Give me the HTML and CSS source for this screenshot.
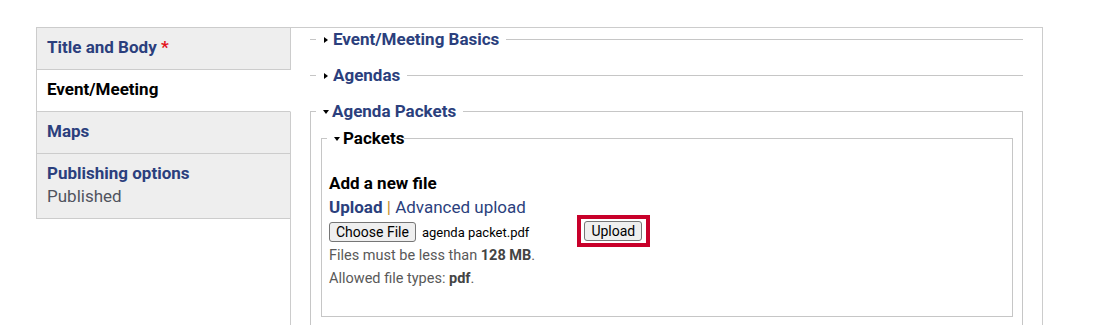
FILE: index.html
```html
<!DOCTYPE html>
<html>

<head>
  <title>Edit Meeting</title>
  <link rel="stylesheet" href="styles.css">
</head>

<body>
  <div class="page">
    <div class="vertical-tabs">
      <ul class="tabs-menu">
        <li class="tab-item">
          <span class="tab-title">Title and Body <span class="required">*</span></span>
        </li>
        <li class="tab-item active">
          <span class="tab-title">Event/Meeting</span>
        </li>
        <li class="tab-item">
          <span class="tab-title">Maps</span>
        </li>
        <li class="tab-item">
          <span class="tab-title">Publishing options</span>
          <span class="tab-summary">Published</span>
        </li>
      </ul>

      <div class="tabs-pane">
        <fieldset class="group collapsed">
          <legend><span class="arrow right"></span>Event/Meeting Basics</legend>
        </fieldset>

        <fieldset class="group collapsed">
          <legend><span class="arrow right"></span>Agendas</legend>
        </fieldset>

        <fieldset class="group open">
          <legend><span class="arrow down"></span>Agenda Packets</legend>
          <div class="group-wrapper">
            <fieldset class="group open inner">
              <legend><span class="arrow down"></span>Packets</legend>
              <div class="inner-wrapper">
                <div class="field-label">Add a new file</div>
                <div class="upload-links">
                  <a class="current">Upload</a> <span class="sep">|</span> <a>Advanced upload</a>
                </div>
                <div class="file-row">
                  <button class="btn">Choose File</button>
                  <span class="file-name">agenda packet.pdf</span>
                  <span class="highlight">
                    <button class="btn">Upload</button>
                  </span>
                </div>
                <div class="description">Files must be less than <strong>128 MB</strong>.</div>
                <div class="description second">Allowed file types: <strong>pdf</strong>.</div>
              </div>
            </fieldset>
          </div>
        </fieldset>
      </div>
    </div>
  </div>
</body>

</html>
```

FILE: styles.css
```css
body {
  margin: 0;
  font-family: Roboto, "Liberation Sans", sans-serif;
  background-color: #fff;
  color: #000;
  overflow: hidden;
}

.page {
  padding: 27px 0 0 36px;
}

.vertical-tabs {
  display: flex;
  align-items: flex-start;
  width: 1007px;
}

/* left tab list */
.tabs-menu {
  list-style: none;
  margin: 0;
  padding: 0;
  width: 255px;
  flex-shrink: 0;
  border-top: 1px solid #ccc;
  box-sizing: border-box;
}

.tab-item {
  padding: 9px 10px 12px;
  background-color: #eee;
  border: 1px solid #ccc;
  border-top: none;
  line-height: 20px;
}

.tab-item.active {
  background-color: #fff;
  border-right-color: #fff;
  position: relative;
  z-index: 1;
}

.tab-title {
  display: block;
  font-size: 17px;
  font-weight: bold;
  color: #2b3f7d;
}

.active .tab-title {
  color: #000;
}

.required {
  color: #e4121b;
}

.tab-summary {
  display: block;
  margin-top: 3px;
  font-size: 17px;
  color: #50535e;
}

/* right pane */
.tabs-pane {
  flex: 1;
  margin-left: -1px;
  min-height: 320px;
  border: 1px solid #ccc;
  border-bottom: none;
  padding: 1px 19px 0 19px;
}

.group {
  margin: 0 0 16px;
  padding: 0;
  min-width: 0;
  border: 1px solid #c6c6c6;
  border-bottom: none;
}

.group.collapsed {
  border-width: 1px 0 0 0;
}

.group legend {
  margin-left: 5px;
  padding: 0 7px;
  font-size: 17px;
  font-weight: bold;
  line-height: 20px;
  color: #2b3f7d;
}

.group.collapsed legend {
  margin-left: 6px;
  padding-left: 8px;
}

.arrow {
  display: inline-block;
  width: 0;
  height: 0;
  vertical-align: middle;
  position: relative;
  top: -1px;
}

.arrow.right {
  border-left: 4px solid #000;
  border-top: 3px solid transparent;
  border-bottom: 3px solid transparent;
  margin-right: 5px;
}

.arrow.down {
  border-top: 4px solid #000;
  border-left: 3.5px solid transparent;
  border-right: 3.5px solid transparent;
  margin-right: 3px;
}

.group-wrapper {
  padding: 7px 9px 20px 10px;
}

.group.inner {
  border-bottom: 1px solid #c6c6c6;
  margin: 0;
}

.group.inner legend {
  color: #000;
  padding-right: 0;
}

.inner-wrapper {
  padding: 25px 7px 27px 7px;
}

.field-label {
  font-size: 17px;
  font-weight: bold;
  line-height: 20px;
  margin-bottom: 5px;
}

.upload-links {
  font-size: 17px;
  line-height: 18px;
  color: #2b3f7d;
}

.upload-links a {
  color: #2b3f7d;
}

.upload-links .current {
  font-weight: bold;
}

.upload-links .sep {
  color: #c4922a;
}

.file-row {
  display: flex;
  align-items: center;
  margin-top: 6px;
  height: 20px;
}

.btn {
  font-family: Roboto, "Liberation Sans", sans-serif;
  font-size: 14px;
  line-height: 16px;
  padding: 1px 6px;
  color: #000;
  background-color: #efefef;
  border: 1px solid #767676;
  border-radius: 3px;
}

.file-name {
  font-size: 13px;
  margin-left: 6px;
  width: 155px;
}

.highlight {
  display: flex;
  margin: -7px 0 -5px;
  padding: 2px 3.5px;
  border: 4px solid #c8002a;
}

.description {
  font-size: 14.5px;
  line-height: 20px;
  color: #595959;
  margin-top: 4px;
}

.description.second {
  margin-top: 3px;
}

.description strong {
  color: #444;
}
```
